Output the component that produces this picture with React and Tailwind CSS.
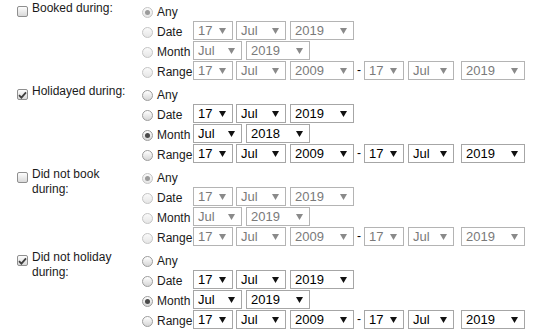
import React from 'react';

const Radio = ({ checked, disabled }) => (
  <span
    className={`mt-[6px] w-[11px] h-[11px] rounded-full border flex items-center justify-center shrink-0 ${
      disabled ? 'border-[#c4c4c4] bg-gradient-to-b from-[#fafafa] to-[#e6e6e6]' : 'border-[#9c9c9c] bg-gradient-to-b from-[#ffffff] to-[#d6d6d6]'
    }`}
  >
    {checked && <span className={`w-[5px] h-[5px] rounded-full ${disabled ? 'bg-[#9a9a9a]' : 'bg-[#4a4a4a]'}`} />}
  </span>
);

const Checkbox = ({ checked }) => (
  <span className="mt-[6px] w-[11px] h-[11px] rounded-[2px] border border-[#8f8f8f] bg-gradient-to-b from-[#fdfdfd] to-[#d9d9d9] flex items-center justify-center shrink-0">
    {checked && (
      <svg width="9" height="8" viewBox="0 0 9 8">
        <path d="M1 4.2 L3.4 6.6 L8 1.4" fill="none" stroke="#3f3f3f" strokeWidth="1.8" />
      </svg>
    )}
  </span>
);

const Select = ({ value, w, disabled, className = '' }) => (
  <div
    className={`h-[19px] flex items-center justify-between border pl-[4px] pr-[6px] shrink-0 text-[13px] ${w} ${className} ${
      disabled ? 'border-[#b4b4b4] text-[#7a7a7a]' : 'border-[#a6a6a6] text-black'
    }`}
  >
    <span className="leading-[17px]">{value}</span>
    <svg width="7" height="6" viewBox="0 0 7 6">
      <polygon points="0,0 7,0 3.5,6" fill={disabled ? '#8a8a8a' : '#111'} />
    </svg>
  </div>
);

const Line = ({ label, checked, disabled, first, children }) => (
  <div className={`flex items-start ${first ? 'h-[21px]' : 'h-[20px]'}`}>
    <div className={first ? 'mt-[1px]' : ''}>
      <Radio checked={checked} disabled={disabled} />
    </div>
    <span className={`ml-[4px] w-[36px] min-w-0 shrink-0 whitespace-nowrap leading-[15px] text-[#1a1a1a] ${first ? 'mt-[5px]' : 'mt-[4px]'}`}>
      {label}
    </span>
    {children}
  </div>
);

const Section = ({ label, on, month }) => {
  const d = !on;
  return (
    <div className="flex mb-[2px]">
      <div className="w-[142px] flex pl-[17px] shrink-0">
        <Checkbox checked={on} />
        <span className="ml-[4px] w-[100px] leading-[15px] mt-[1px] text-[#1a1a1a]">{label}</span>
      </div>
      <div className="flex flex-col">
        <Line label="Any" first checked={!on} disabled={d} />
        <Line label="Date" disabled={d}>
          <Select value="17" w="w-[40px]" disabled={d} />
          <Select value="Jul" w="w-[50px]" disabled={d} className="ml-[3px]" />
          <Select value="2019" w="w-[64px]" disabled={d} className="ml-[4px]" />
        </Line>
        <Line label="Month" checked={on} disabled={d}>
          <Select value="Jul" w="w-[49px]" disabled={d} />
          <Select value={month} w="w-[64px]" disabled={d} className="ml-[4px]" />
        </Line>
        <Line label="Range" disabled={d}>
          <Select value="17" w="w-[40px]" disabled={d} />
          <Select value="Jul" w="w-[50px]" disabled={d} className="ml-[3px]" />
          <Select value="2009" w="w-[64px]" disabled={d} className="ml-[4px]" />
          <span className="w-[10px] shrink-0 text-center leading-[19px]">-</span>
          <Select value="17" w="w-[40px]" disabled={d} />
          <Select value="Jul" w="w-[46px]" disabled={d} className="ml-[4px]" />
          <Select value="2019" w="w-[64px]" disabled={d} className="ml-[7px]" />
        </Line>
      </div>
    </div>
  );
};

export default function App() {
  return (
    <div className="w-[539px] h-[334px] bg-white overflow-hidden text-[12px] font-['Liberation_Sans',Arial,sans-serif]">
      <Section label="Booked during:" on={false} month="2019" />
      <Section label="Holidayed during:" on month="2018" />
      <Section label="Did not book during:" on={false} month="2019" />
      <Section label="Did not holiday during:" on month="2019" />
    </div>
  );
}
